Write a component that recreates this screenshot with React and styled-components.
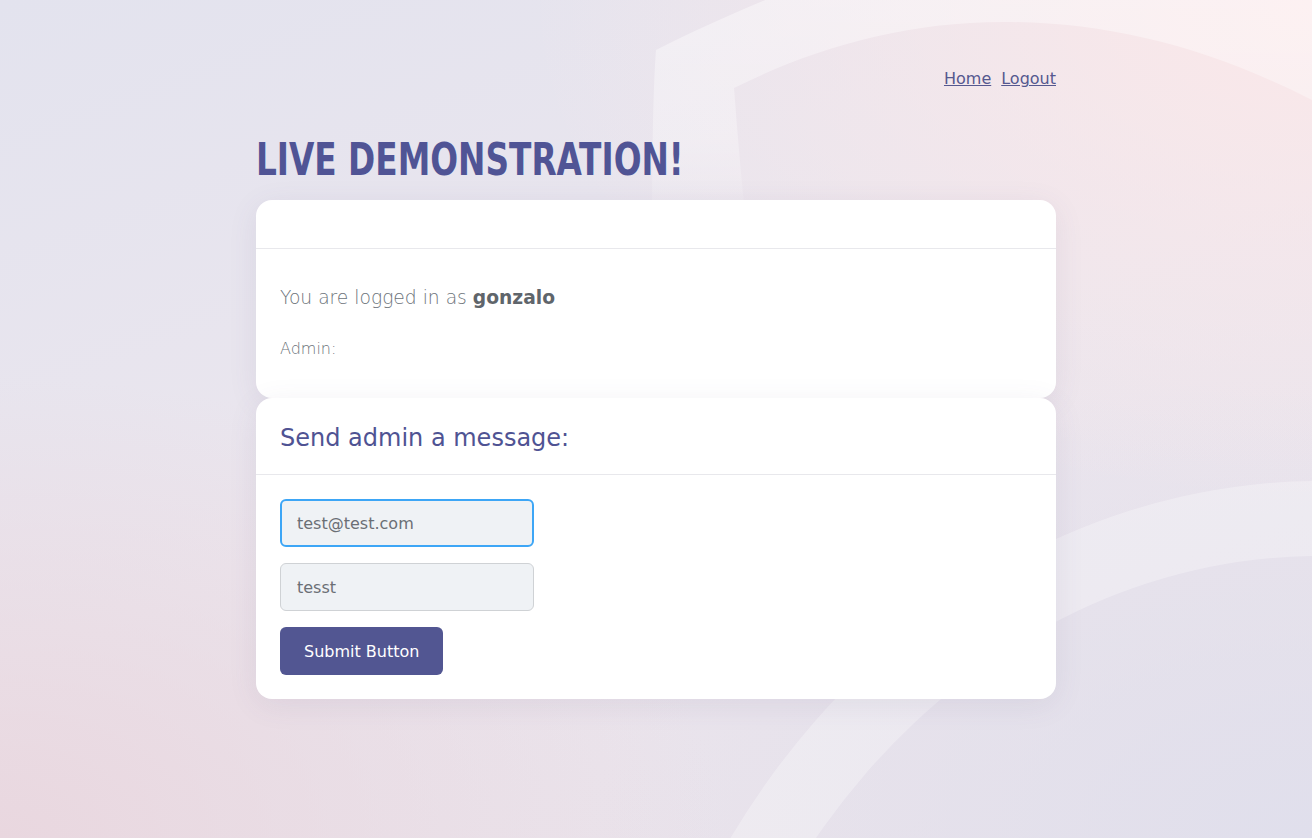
import React, { useEffect, useRef } from "react";
import styled, { createGlobalStyle } from "styled-components";

const GlobalStyle = createGlobalStyle`
  * { box-sizing: border-box; }
  html, body { margin: 0; padding: 0; }
  body {
    font-family: "DejaVu Sans", "Noto Sans", sans-serif;
    color: #212529;
  }
`;

const Page = styled.div`
  position: relative;
  min-height: 100vh;
  overflow: hidden;
  background:
    radial-gradient(ellipse 60% 60% at 100% 0%, #fbe8e9 0%, rgba(251, 232, 233, 0) 100%),
    radial-gradient(ellipse 55% 55% at 0% 100%, #e9d7df 0%, rgba(233, 215, 223, 0) 100%),
    radial-gradient(ellipse 55% 55% at 100% 100%, #e0dfec 0%, rgba(224, 223, 236, 0) 100%),
    linear-gradient(160deg, #e3e3ee 0%, #ebe6ee 50%, #e9e2ea 100%);
`;

const Decor = styled.svg`
  position: absolute;
  inset: 0;
  width: 100%;
  height: 100%;
  pointer-events: none;
`;

const Container = styled.div`
  position: relative;
  width: 800px;
  margin: 0 auto;
  padding-top: 69px;
  padding-bottom: 60px;
`;

const Nav = styled.nav`
  display: flex;
  justify-content: flex-end;
  gap: 10px;
  height: 19px;
  line-height: 19px;
`;

const NavLink = styled.a`
  font-size: 16px;
  color: #55588f;
  text-decoration: underline;
  cursor: pointer;
`;

const Title = styled.h1`
  margin: 45px 0 13px;
  font-family: "DejaVu Sans Condensed", "DejaVu Sans", sans-serif;
  font-stretch: condensed;
  font-weight: 700;
  font-size: 44px;
  line-height: 54px;
  color: #505495;
  white-space: nowrap;
  transform: scaleX(0.827);
  transform-origin: left center;
`;

const Card = styled.section`
  background: #ffffff;
  border-radius: 16px;
  box-shadow: 0 6px 30px rgba(90, 80, 120, 0.09);
`;

const CardHeader = styled.header`
  min-height: ${(p) => (p.$empty ? "49px" : "auto")};
  padding: ${(p) => (p.$empty ? "0" : "26px 24px 21px")};
  border-bottom: 1px solid #e8e8ec;
`;

const CardTitle = styled.h4`
  margin: 0;
  font-size: 24px;
  font-weight: 400;
  line-height: 29px;
  color: #4f5393;
`;

const CardBody = styled.div`
  padding: ${(p) => p.$padding};
`;

const Lead = styled.p`
  margin: 0 0 25px;
  font-size: 18.7px;
  line-height: 28px;
  font-weight: 300;
  color: #6c737a;

  strong {
    font-weight: 700;
    color: #5f656b;
  }
`;

const Muted = styled.p`
  margin: 0;
  font-size: 16px;
  line-height: 24px;
  font-weight: 300;
  color: #6c737a;
`;

const Form = styled.form`
  display: flex;
  flex-direction: column;
  align-items: flex-start;
  gap: 16px;
`;

const Input = styled.input`
  width: 254px;
  height: 48px;
  padding: 0 ${(p) => (p.$focused ? "15px" : "16px")};
  font-family: "DejaVu Sans", sans-serif;
  font-size: 16px;
  color: #6b6f75;
  background: #eff2f5;
  border: ${(p) => (p.$focused ? "2px solid #3da6f6" : "1px solid #cfd2d5")};
  border-radius: 6px;
  outline: none;
  caret-color: #333;
`;

const Button = styled.button`
  height: 48px;
  padding: 0 24px;
  font-family: "DejaVu Sans", sans-serif;
  font-size: 16px;
  color: #ffffff;
  background: #525692;
  border: none;
  border-radius: 6px;
  cursor: pointer;
`;

export default function App() {
  const emailRef = useRef(null);

  useEffect(() => {
    const el = emailRef.current;
    if (el) {
      el.focus();
      const len = el.value.length;
      el.setSelectionRange(len, len);
    }
  }, []);

  return (
    <Page>
      <GlobalStyle />
      <Decor viewBox="0 0 1312 838" preserveAspectRatio="none" aria-hidden="true">
        <defs>
          <linearGradient id="fadeTop" x1="0" y1="0" x2="0" y2="1">
            <stop offset="0" stopColor="#ffffff" stopOpacity="0.42" />
            <stop offset="0.6" stopColor="#ffffff" stopOpacity="0.3" />
            <stop offset="1" stopColor="#ffffff" stopOpacity="0" />
          </linearGradient>
        </defs>
        <path
          d="M 652 240 C 652 160 653 90 656 50 C 700 28 740 10 790 -10 L 1312 -10 L 1312 100 C 1210 48 1110 22 1004 22 C 900 22 810 50 734 88 C 738 140 742 190 748 240 Z"
          fill="url(#fadeTop)"
        />
        <path
          fillRule="evenodd"
          fill="#ffffff"
          fillOpacity="0.28"
          d="M 606 1300 A 714 819 0 0 1 2034 1300 A 714 819 0 0 1 606 1300 Z M 677 1300 A 643 744 0 0 1 1963 1300 A 643 744 0 0 1 677 1300 Z"
        />
      </Decor>
      <Container>
        <Nav>
          <NavLink href="#">Home</NavLink>
          <NavLink href="#">Logout</NavLink>
        </Nav>
        <Title>LIVE DEMONSTRATION!</Title>
        <Card>
          <CardHeader $empty />
          <CardBody $padding="35px 24px 37px">
            <Lead>
              You are logged in as <strong>gonzalo</strong>
            </Lead>
            <Muted>Admin:</Muted>
          </CardBody>
        </Card>
        <Card>
          <CardHeader>
            <CardTitle>Send admin a message:</CardTitle>
          </CardHeader>
          <CardBody $padding="24px">
            <Form onSubmit={(e) => e.preventDefault()}>
              <Input ref={emailRef} $focused defaultValue="test@test.com" />
              <Input defaultValue="tesst" />
              <Button type="submit">Submit Button</Button>
            </Form>
          </CardBody>
        </Card>
      </Container>
    </Page>
  );
}
